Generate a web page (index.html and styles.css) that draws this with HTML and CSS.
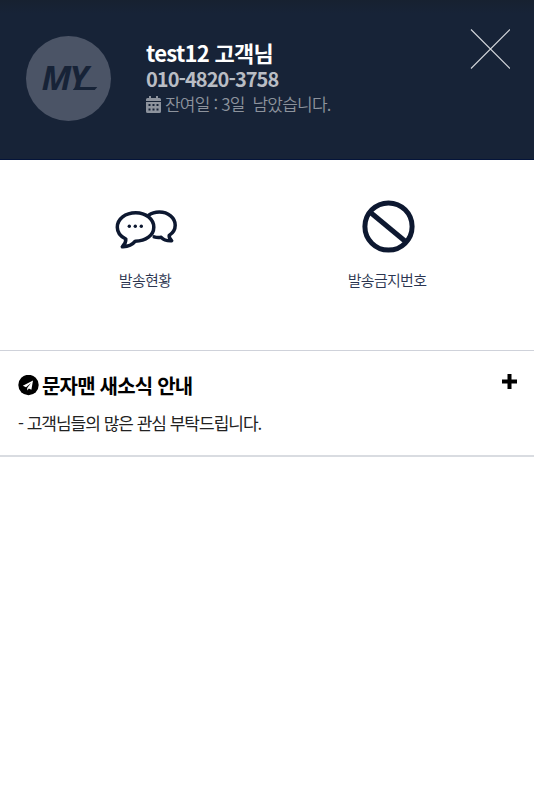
FILE: index.html
```html
<!DOCTYPE html>
<html lang="ko">
<head>
  <meta charset="UTF-8">
  <meta name="viewport" content="width=device-width, initial-scale=1.0">
  <title>문자맨</title>
  <link rel="stylesheet" href="styles.css">
</head>
<body>
  <header class="header">
    <div class="avatar"><span class="logo">MY</span></div>
    <div class="user">
      <h2 class="user-name">test12 고객님</h2>
      <p class="user-phone">010-4820-3758</p>
      <p class="user-days">
        <svg class="calendar" viewBox="0 0 15 17">
          <path fill="currentColor" fill-rule="evenodd" d="M3 0h2v2h5V0h2v2h1.500q1.500 0 1.500 1.500V5H0V3.500Q0 2 1.500 2H3zM0 6h15v9.500q0 1.500-1.500 1.500h-12Q0 17 0 15.500zM2.500 8v2h2V8zm4 0v2h2V8zm4 0v2h2V8zm-8 4.500v2h2v-2zm4 0v2h2v-2zm4 0v2h2v-2z"/>
        </svg>
        <span class="days-text">잔여일 : 3일&nbsp; 남았습니다.</span>
      </p>
    </div>
    <button class="close" type="button" aria-label="닫기">
      <svg width="40" height="40" viewBox="0 0 40 40">
        <path d="M1 .5l39 39M40 .5l-39 39" stroke="#d3d6db" stroke-width="1.100"/>
      </svg>
    </button>
  </header>

  <nav class="menu">
    <a class="menu-item" href="#">
      <svg class="menu-icon" width="64" height="54" viewBox="0 0 64 54" fill="none" stroke="#0d1830" stroke-width="3.500" stroke-linejoin="round" stroke-linecap="round">
        <g transform="translate(.8 .7)">
          <path d="M35 15.500c3-2.300 6.500-3.200 10.500-3.200 9 0 15.900 6 15.900 13.200 0 4.200-2.400 7.800-6 10.200-.3 2.500.5 3.500 2.500 5.300-4 .2-7.800-.4-10.500-3.400-2.600.4-5 .2-7-.4"/>
          <path d="M22 13C11.500 13 3.500 19.200 3.500 27.500c0 5 3.300 9.300 8.500 11.800.3 3.200-.8 5.200-3.500 7.700 5 .2 10-1.800 13-5.500C32 41.500 40 35.500 40 27.500S32 13 22 13z"/>
          <g fill="#0d1830" stroke="none">
            <circle cx="15.500" cy="26.500" r="1.700"/>
            <circle cx="21.500" cy="26.500" r="1.700"/>
            <circle cx="27.500" cy="26.500" r="1.700"/>
          </g>
        </g>
      </svg>
      <span class="menu-label">발송현황</span>
    </a>
    <a class="menu-item" href="#">
      <svg class="menu-icon" width="58" height="54" viewBox="0 0 58 54" fill="none" stroke="#0d1830" stroke-width="5">
        <circle cx="30.500" cy="27.500" r="23.600"/>
        <path d="M12.500 13.500l35 29"/>
      </svg>
      <span class="menu-label">발송금지번호</span>
    </a>
  </nav>

  <section class="notice">
    <div class="notice-head">
      <svg class="notice-icon" width="21" height="21" viewBox="0 0 21 21">
        <circle cx="10.500" cy="10" r="10.200" fill="#000"/>
        <path fill="#fff" d="M15 5.500L4.800 10.800l3.200 1.400L13 8l-3.800 5v2.500l1.700-2 2.500 1.200z"/>
      </svg>
      <h3 class="notice-title">문자맨 새소식 안내</h3>
      <svg class="plus" width="15" height="15" viewBox="0 0 15 15">
        <path d="M7.500 0v15M0 7.500h15" stroke="#000" stroke-width="4"/>
      </svg>
    </div>
    <p class="notice-text">- 고객님들의 많은 관심 부탁드립니다.</p>
  </section>
</body>
</html>
```
FILE: styles.css
```css
* {
  margin: 0;
  padding: 0;
  box-sizing: border-box;
}

body {
  background: #fff;
  font-family: "Noto Sans CJK KR", sans-serif;
}

/* Header */
.header {
  display: flex;
  align-items: flex-start;
  height: 160px;
  padding: 36px 24px 0 26px;
  background: linear-gradient(#172130, #172337 14px);
  border-bottom: 1px solid #04143a;
}

.avatar {
  display: flex;
  justify-content: center;
  align-items: center;
  width: 85px;
  height: 85px;
  border-radius: 50%;
  background: #4b5466;
}

.logo {
  position: relative;
  color: #172337;
  font-family: "Open Sans", sans-serif;
  font-size: 34px;
  font-style: italic;
  font-weight: 700;
  line-height: 40px;
  letter-spacing: -2px;
  margin-right: 9px;
  margin-top: -3px;
}

/* tail of the logo */
.logo::after {
  content: "";
  position: absolute;
  right: -9px;
  bottom: 7px;
  width: 22px;
  height: 3px;
  background: #172337;
  transform: skewX(-40deg);
}

.user {
  flex: 1;
  margin-left: 35px;
  padding-top: 2px;
}

.user-name {
  color: #fff;
  font-size: 22px;
  font-weight: 700;
  line-height: 28px;
  letter-spacing: -0.7px;
}

.user-phone {
  color: #b9bdc4;
  font-size: 20px;
  font-weight: 700;
  line-height: 26px;
  letter-spacing: -0.95px;
}

.user-days {
  display: flex;
  align-items: center;
  color: #8d939d;
  font-size: 17px;
  font-weight: 350;
  line-height: 24px;
}

.calendar {
  width: 15px;
  height: 17px;
  margin-right: 4px;
}

.days-text {
  letter-spacing: -0.8px;
  white-space: nowrap;
}

.close {
  height: 40px;
  margin-top: -7px;
  border: none;
  background: none;
  cursor: pointer;
}

/* Menu */
.menu {
  display: flex;
  height: 190px;
  padding: 39px 26px 0 24px;
}

.menu-item {
  display: flex;
  flex: 1;
  flex-direction: column;
  align-items: center;
  text-decoration: none;
}

.menu-label {
  margin-top: 16px;
  color: #2b3550;
  font-size: 15px;
  font-weight: 350;
  line-height: 22px;
  letter-spacing: -0.7px;
}

/* Notice */
.notice {
  height: 107px;
  padding: 20px 17px 0 18px;
  border-top: 1px solid #cfd2da;
  border-bottom: 2px solid #d9dce1;
}

.notice-head {
  display: flex;
  align-items: center;
  height: 28px;
}

.notice-title {
  flex: 1;
  margin-left: 3px;
  color: #000;
  font-size: 20px;
  font-weight: 700;
  letter-spacing: -0.8px;
}

.plus {
  margin-top: -7px;
}

.notice-text {
  margin-top: 11px;
  color: #222;
  font-size: 17px;
  line-height: 26px;
  letter-spacing: -1px;
}
```
